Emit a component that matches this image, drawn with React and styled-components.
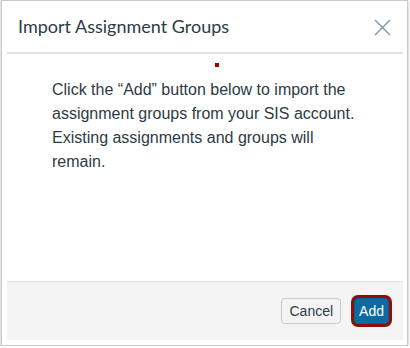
import React from "react";
import styled, { createGlobalStyle } from "styled-components";

const Global = createGlobalStyle`
  html, body { margin: 0; padding: 0; background: #ffffff; }
  body { font-family: "Liberation Sans", Arial, sans-serif; }
`;

const Frame = styled.div`
  box-sizing: border-box;
  margin-left: 1px;
  width: 407px;
  height: 346px;
  border: 1px solid #c9c9c9;
  box-shadow: 0 1px 2px rgba(0, 0, 0, 0.35);
  background: #ffffff;
  padding: 0 4px 5px 5px;
  display: flex;
  flex-direction: column;
`;

const Header = styled.div`
  height: 51px;
  border-bottom: 2px solid #dfe2e5;
  display: flex;
  align-items: center;
  justify-content: space-between;
  padding: 0 12px 0 11px;
`;

const Title = styled.h2`
  margin: 0;
  padding-bottom: 2px;
  font-family: Lato, "Liberation Sans", sans-serif;
  font-weight: 400;
  font-size: 18px;
  color: #2d3b45;
`;

const CloseButton = styled.button`
  border: 0;
  background: transparent;
  padding: 0;
  width: 18px;
  height: 18px;
  display: flex;
  align-items: center;
  justify-content: center;
  margin-top: 2px;
`;

const Body = styled.div`
  flex: 1;
  display: flex;
  flex-direction: column;
  align-items: flex-start;
  padding: 9px 0 0 45px;
`;

const Marker = styled.div`
  width: 4px;
  height: 4px;
  background: #a00000;
  margin-left: 163px;
`;

const Message = styled.p`
  margin: 11px 0 0 0;
  width: 312px;
  font-size: 16px;
  line-height: 24px;
  color: #2d3b45;
`;

const Footer = styled.div`
  height: 58px;
  border-top: 1px solid #e2e2e2;
  background: #f4f4f4;
  display: flex;
  align-items: center;
  justify-content: flex-end;
  gap: 13px;
  padding: 0 14px 0 0;
`;

const Button = styled.button`
  box-sizing: border-box;
  height: 26px;
  padding: 0 ${(p) => (p.$primary ? "4px" : "7px")};
  border-radius: 4px;
  font-family: "Liberation Sans", Arial, sans-serif;
  font-size: 14px;
  border: 1px solid ${(p) => (p.$primary ? "#0a5f8f" : "#c6cbcf")};
  background: ${(p) => (p.$primary ? "#0b6aa2" : "#f4f4f4")};
  color: ${(p) => (p.$primary ? "#ffffff" : "#2d3b45")};
  box-shadow: ${(p) => (p.$primary ? "0 0 0 3px #8f0c0c" : "none")};
`;

export default function App() {
  return (
    <>
      <Global />
      <Frame>
        <Header>
          <Title>Import Assignment Groups</Title>
          <CloseButton aria-label="Close">
            <svg width="17" height="17" viewBox="0 0 17 17">
              <path d="M1 1 L16 16 M16 1 L1 16" stroke="#7f93a6" strokeWidth="1.4" fill="none" />
            </svg>
          </CloseButton>
        </Header>
        <Body>
          <Marker />
          <Message>
            Click the “Add” button below to import the assignment groups from your SIS account. Existing assignments and groups will remain.
          </Message>
        </Body>
        <Footer>
          <Button>Cancel</Button>
          <Button $primary>Add</Button>
        </Footer>
      </Frame>
    </>
  );
}
